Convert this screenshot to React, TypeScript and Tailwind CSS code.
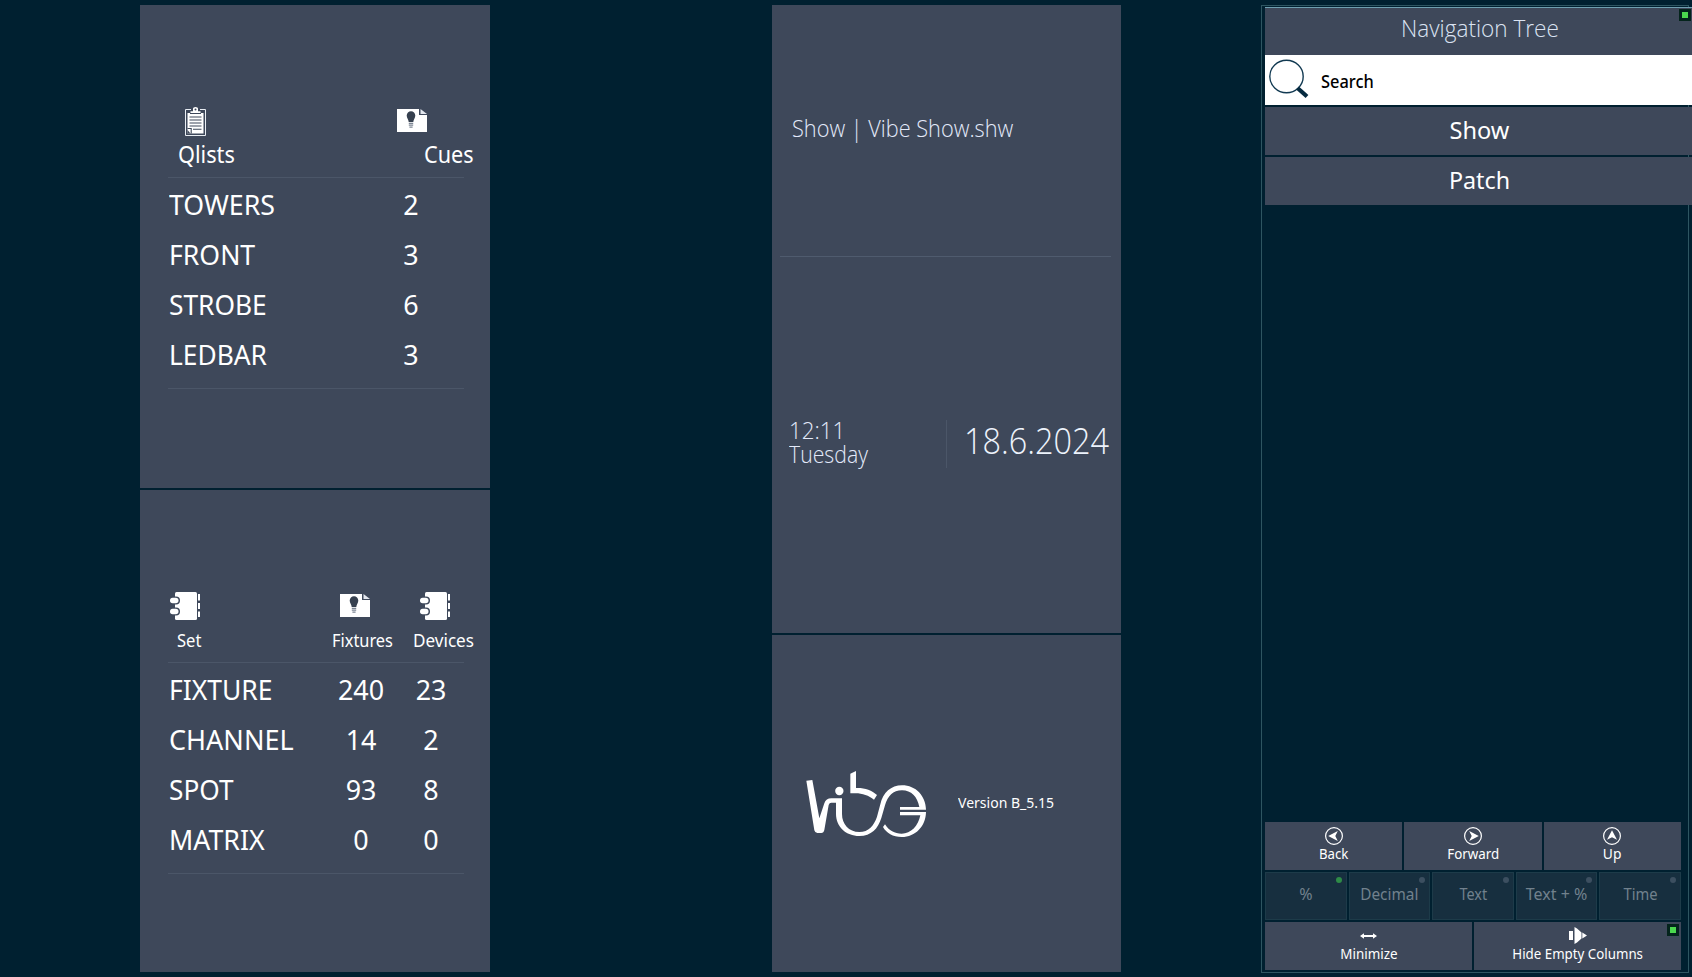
import type { ReactNode } from "react";

function ClipboardIcon() {
  return (
    <svg width="21" height="30" viewBox="0 0 21 30" fill="none">
      <path d="M6 2.500H.5v26h20v-26H15" stroke="#e8edf3" />
      <path d="M2.500 6h3V4.300h2.500V1.500Q8 0 10.500 0T13 1.500v2.800h2.500V6h3v20.500h-16z" fill="#fff" />
      <circle cx="10.500" cy="2.500" r="1" fill="#3e485a" />
      <path d="M5 6.500h11" stroke="#3e485a" />
      <path d="M4.500 10h12M4.500 13h12M4.500 16h12M4.500 19h12M8 22.300h8.500" stroke="#3e485a" strokeWidth="1.100" />
      <path d="M2.500 21.500h3.700v5" stroke="#3e485a" strokeWidth="1.100" />
      <path d="M2.500 23l3 3.500h-3z" fill="#3e485a" />
    </svg>
  );
}

function FixtureIcon() {
  return (
    <svg width="30" height="23" viewBox="0 0 30 23">
      <path d="M0 0h22v6h8v17H0z" fill="#fff" />
      <path d="M23.500 0L30 5h-6.500z" fill="#e3e7ee" />
      <path d="M9.700 6.500a4.300 4.300 0 0 1 8.600 0c0 2.800-1.800 4-2 6.500h-4.600c-.2-2.500-2-3.700-2-6.500z" fill="#36404f" />
      <path d="M11.800 14.300h4.400M11.800 16.200h4.400M12.400 18.100h3.200" stroke="#7b8492" strokeWidth="1.200" />
    </svg>
  );
}

function NotebookIcon() {
  return (
    <svg width="31" height="28" viewBox="0 0 31 28">
      <rect x="5" y="0" width="22" height="28" rx="1.500" fill="#fff" />
      <path d="M29 2v6.500M29 11v6M29 19.500V25" stroke="#fff" strokeWidth="2" />
      <rect x="-1" y="4.500" width="11" height="8" rx="4" fill="#3e485a" />
      <rect x="-1" y="15.500" width="11" height="8" rx="4" fill="#3e485a" />
      <rect x="0" y="5.800" width="8.500" height="5.400" rx="2.700" fill="#fff" />
      <rect x="0" y="16.800" width="8.500" height="5.400" rx="2.700" fill="#fff" />
    </svg>
  );
}

function VibeLogo() {
  return (
    <svg width="124" height="69" viewBox="45 60 372 207" fill="none">
      <path d="M49 92L67 90L88 205L103 160Q108 145 124 145H156V192C156 222 176 246 208 246C236 246 252 226 261 200L271 163C279 128 303 106 336 106C378 106 407 138 408 179H330V171H388C382 140 364 121 336 121C309 121 293 138 285 166L274 204C264 236 244 258 208 258C168 258 138 230 138 192V158H124Q118 158 116 165L103 240Q101 249 94 249H82Q75 249 73 241Z" fill="#fff" />
      <path d="M181 71L198 63V114C224 113 245 121 261 135L252 149C236 136 214 129 193 130H181Z" fill="#fff" />
      <circle cx="148" cy="123" r="12.500" fill="#fff" />
      <path d="M330 186H408C407 229 377 261 335 261C309 261 289 249 279 231L285 223C297 242 314 251 335 251C363 251 385 228 391 196H330Z" fill="#fff" />
    </svg>
  );
}

function SearchIcon() {
  return (
    <svg width="42" height="42" viewBox="0 0 42 42" fill="none">
      <ellipse cx="18.500" cy="18.500" rx="16.700" ry="16.200" stroke="#123a52" strokeWidth="1.400" />
      <path d="M29.500 30L39 38.500" stroke="#062a40" strokeWidth="4.200" />
    </svg>
  );
}

function ArrowCircle({ className }: { className: string }) {
  return (
    <svg width="18" height="18" viewBox="0 0 18 18" className={className}>
      <circle cx="9" cy="9" r="8.400" fill="none" stroke="#fff" strokeWidth="1.200" />
      <path d="M3.200 9L12.800 4L10.300 9L12.800 14Z" fill="#fff" />
    </svg>
  );
}

function MinimizeIcon() {
  return (
    <svg width="17" height="6" viewBox="0 0 17 6">
      <path d="M0 3L4 .2V2H13V.2L17 3L13 5.800V4H4V5.800Z" fill="#fff" />
    </svg>
  );
}

function HideColumnsIcon() {
  return (
    <svg width="18" height="17" viewBox="0 0 18 17">
      <path d="M0 4h4v9H0zM5.500 0L8 1.500L12.500 5.500V11.500L8 15.500L5.500 17ZM13.300 5.500L18 8.500L13.300 11.500Z" fill="#fff" />
    </svg>
  );
}

function Divider({ className }: { className: string }) {
  return <div className={`ml-7 h-px w-[296px] bg-[#4b5668] ${className}`} />;
}

function NameCell({ children, className }: { children: ReactNode; className: string }) {
  return (
    <div className="w-[150px]">
      <span className={`inline-block origin-left ${className}`}>{children}</span>
    </div>
  );
}

function NumCell({ children, className }: { children: ReactNode; className: string }) {
  return (
    <div className={`text-center ${className}`}>
      <span className="inline-block scale-x-[.96]">{children}</span>
    </div>
  );
}

const qlists = [
  { name: "TOWERS", cues: 2, fit: "scale-x-[.955]" },
  { name: "FRONT", cues: 3, fit: "scale-x-[.95]" },
  { name: "STROBE", cues: 6, fit: "scale-x-[.94]" },
  { name: "LEDBAR", cues: 3, fit: "scale-x-[.94]" },
];

const sets = [
  { name: "FIXTURE", fixtures: 240, devices: 23, fit: "scale-x-[.945]" },
  { name: "CHANNEL", fixtures: 14, devices: 2, fit: "scale-x-[.965]" },
  { name: "SPOT", fixtures: 93, devices: 8, fit: "scale-x-[.937]" },
  { name: "MATRIX", fixtures: 0, devices: 0, fit: "scale-x-[.955]" },
];

const formats = [
  { label: "%", on: true, fit: "" },
  { label: "Decimal", on: false, fit: "scale-x-[.96]" },
  { label: "Text", on: false, fit: "scale-x-[.9]" },
  { label: "Text + %", on: false, fit: "" },
  { label: "Time", on: false, fit: "scale-x-[.92]" },
];

function QlistCard() {
  return (
    <section className="h-[483px] bg-[#3e485a] pt-[102px]">
      <div className="flex h-[29px] items-start">
        <div className="ml-[45px] w-[21px]"><ClipboardIcon /></div>
        <div className="ml-[191px] mt-[2px]"><FixtureIcon /></div>
      </div>
      <div className="flex h-[37px] text-[23px] leading-[37px]">
        <span className="ml-[38px] w-[246px] origin-left scale-x-[.945]">Qlists</span>
        <span className="origin-left scale-x-[.94]">Cues</span>
      </div>
      <Divider className="mt-1" />
      <div className="mt-[2px] pl-[29px] text-[28px]">
        {qlists.map((q) => (
          <div key={q.name} className="flex h-[50px] leading-[48px]">
            <NameCell className={q.fit}>{q.name}</NameCell>
            <NumCell className="ml-[62px] w-[61px]">{q.cues}</NumCell>
          </div>
        ))}
      </div>
      <Divider className="mt-2" />
    </section>
  );
}

function SetCard() {
  return (
    <section className="h-[482px] bg-[#3e485a] pt-[102px]">
      <div className="flex h-[28px] items-start">
        <div className="ml-[30px] w-[31px]"><NotebookIcon /></div>
        <div className="ml-[139px] mt-[2px] w-[30px]"><FixtureIcon /></div>
        <div className="ml-[50px]"><NotebookIcon /></div>
      </div>
      <div className="flex h-10 text-[18px] leading-10">
        <span className="ml-[37px] w-[155px] origin-left scale-x-[.92]">Set</span>
        <span className="w-[81px] origin-left scale-x-[.91]">Fixtures</span>
        <span className="origin-left scale-x-[.95]">Devices</span>
      </div>
      <Divider className="mt-[2px]" />
      <div className="mt-[2px] pl-[29px] text-[28px]">
        {sets.map((s) => (
          <div key={s.name} className="flex h-[50px] leading-[49px]">
            <NameCell className={s.fit}>{s.name}</NameCell>
            <NumCell className="ml-[12px] w-[60px]">{s.fixtures}</NumCell>
            <NumCell className="ml-[10px] w-[61px]">{s.devices}</NumCell>
          </div>
        ))}
      </div>
      <Divider className="mt-2" />
    </section>
  );
}

function StatusColumn() {
  return (
    <div className="ml-[282px] flex w-[349px] flex-col gap-[2px]">
      <section className="h-[628px] bg-[#3e485a] font-['Open_Sans','Noto_Sans',sans-serif] font-light text-[#e3eafa]">
        <div className="h-[251px] pl-[20px] text-[24px] leading-[245px]">
          <span className="inline-block origin-left scale-x-[.906] whitespace-nowrap">Show | Vibe Show.shw</span>
        </div>
        <div className="ml-2 h-px w-[331px] bg-[#4f5b6e]" />
        <div className="flex pt-[163px]">
          <div className="w-[174px] shrink-0 pl-[17px] text-[24px] leading-[24px]">
            <div className="-mt-[2px] origin-left scale-x-[.93]">12:11</div>
            <div className="origin-left scale-x-[.885]">Tuesday</div>
          </div>
          <div className="h-[48px] w-px shrink-0 bg-[#4b5668]" />
          <div className="pl-[17px] text-[36px] leading-[41px] text-[#edf3fc]">
            <span className="inline-block origin-left scale-x-[.9]">18.6.2024</span>
          </div>
        </div>
      </section>
      <section className="flex h-[337px] items-start bg-[#3e485a] pt-[135px]">
        <div className="ml-[33px] w-[124px]"><VibeLogo /></div>
        <span className="ml-[29px] mt-[21px] origin-left scale-x-[.935] text-[15px] leading-[22px]">Version B_5.15</span>
      </section>
    </div>
  );
}

function GreenLed({ className }: { className: string }) {
  return <div className={`absolute size-[12px] border-[3px] border-[#04241c] bg-[#4bd84e] ${className}`} />;
}

function NavButton({ label, icon, fit }: { label: string; icon: string; fit: string }) {
  return (
    <div className="flex h-[48px] flex-1 flex-col items-center bg-[#3e485a] pt-[5px]">
      <ArrowCircle className={icon} />
      <span className={`text-[15px] leading-[17px] ${fit}`}>{label}</span>
    </div>
  );
}

function NavigationTree() {
  return (
    <div className="ml-[140px] flex h-[968px] w-[428px] flex-col border border-[#2e5561] pl-[3px] pt-px">
      <div className="relative h-[48px] w-[427px] border-t border-[#6f9fb0] bg-[#3e485a] pl-[3px] text-center font-['Open_Sans','Noto_Sans',sans-serif] text-[24px] font-light leading-[40px] text-[#dbe3f2]">
        <span className="inline-block scale-x-[.94]">Navigation Tree</span>
        <GreenLed className="right-[1px] top-[1px]" />
      </div>
      <div className="flex h-[50px] w-[427px] bg-white text-black">
        <div className="ml-[3px] mt-[3px] w-[42px]"><SearchIcon /></div>
        <span className="ml-[11px] origin-left scale-x-[.91] text-[18px] font-medium leading-[52px]">Search</span>
      </div>
      <div className="mt-[2px] h-[48px] w-[427px] bg-[#3e485a] pl-[2px] text-center text-[24px] leading-[46px]">
        <span className="inline-block scale-x-[.983]">Show</span>
      </div>
      <div className="mt-[2px] h-[48px] w-[427px] bg-[#3e485a] pl-[2px] text-center text-[24px] leading-[46px]">
        <span className="inline-block scale-x-[.97]">Patch</span>
      </div>
      <div className="mt-auto flex w-[416px] flex-col gap-[2px] pb-[2px]">
        <div className="flex gap-[2px]">
          <NavButton label="Back" icon="" fit="scale-x-[.88]" />
          <NavButton label="Forward" icon="rotate-180" fit="scale-x-[.89]" />
          <NavButton label="Up" icon="rotate-90" fit="scale-x-[.92]" />
        </div>
        <div className="flex gap-[2px]">
          {formats.map((f) => (
            <div key={f.label} className="relative h-[48px] flex-1 border border-[#1d3b49] bg-[#172f3f] text-center text-[16px] leading-[43px] text-[#71818d]">
              <span className={`inline-block ${f.fit}`}>{f.label}</span>
              <div className={f.on ? "absolute right-[4px] top-[4px] size-[6px] rounded-full bg-[#2e8b47]" : "absolute right-[4px] top-[4px] size-[6px] rounded-full bg-[#3c4f60]"} />
            </div>
          ))}
        </div>
        <div className="flex gap-[2px]">
          <div className="flex h-[48px] flex-1 flex-col items-center bg-[#3e485a] pt-[11px]">
            <MinimizeIcon />
            <span className="mt-[6px] scale-x-[.895] pl-px text-[15px] leading-[17px]">Minimize</span>
          </div>
          <div className="relative flex h-[48px] flex-1 flex-col items-center bg-[#3e485a] pt-[5px]">
            <HideColumnsIcon />
            <span className="mt-px scale-x-[.887] whitespace-nowrap text-[15px] leading-[17px]">Hide Empty Columns</span>
            <GreenLed className="right-[2px] top-[2px]" />
          </div>
        </div>
      </div>
    </div>
  );
}

export default function App() {
  return (
    <main className="flex h-[977px] w-[1692px] overflow-hidden bg-[#002030] pt-[5px] font-['Noto_Sans','Open_Sans',sans-serif] text-white">
      <div className="ml-[140px] flex w-[350px] flex-col gap-[2px]">
        <QlistCard />
        <SetCard />
      </div>
      <StatusColumn />
      <NavigationTree />
    </main>
  );
}
